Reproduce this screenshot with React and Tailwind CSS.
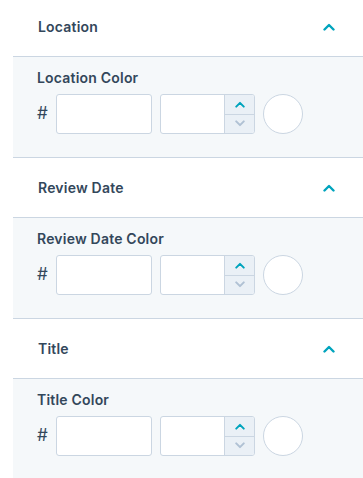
import React from 'react';

const font = { fontFamily: 'Inter, "Noto Sans", sans-serif' };

function Chevron({ className, down }) {
  return (
    <svg viewBox="0 0 12 8" className={className} fill="none" stroke="currentColor" strokeWidth="2.4" strokeLinecap="round" strokeLinejoin="round">
      {down ? <path d="M1.5 1.5 L6 6 L10.5 1.5" /> : <path d="M1.5 6.5 L6 2 L10.5 6.5" />}
    </svg>
  );
}

function Section({ title, label }) {
  return (
    <div>
      {/* header */}
      <div className="h-[60px] flex items-center justify-between pl-[25px] pr-[28px] border-b border-[#cbd6e2] bg-white">
        <div className="text-[14px] font-semibold tracking-[0.2px] text-[#33475b]">{title}</div>
        <Chevron className="w-[12px] h-[8px] text-[#00a4bd]" />
      </div>

      {/* body */}
      <div className="h-[101px] bg-[#f5f8fa] border-b border-[#cbd6e2] pl-[24px] pt-[11px]">
        <div className="text-[14px] leading-[20px] font-semibold tracking-[0.2px] text-[#33475b]">{label}</div>
        <div className="mt-[6px] flex items-center">
          <span className="w-[19px] text-[17px] text-[#33475b]">#</span>
          <div className="w-[96px] h-[40px] bg-white border border-[#cbd6e2] rounded-[3px]" />
          <div className="ml-[8px] w-[95px] h-[40px] bg-white border border-[#cbd6e2] rounded-[3px] flex overflow-hidden">
            <div className="flex-1" />
            <div className="w-[30px] bg-[#eaf0f6] border-l border-[#cbd6e2] flex flex-col">
              <div className="flex-1 flex items-center justify-center border-b border-[#cbd6e2]">
                <Chevron className="w-[10px] h-[7px] text-[#00a4bd]" />
              </div>
              <div className="flex-1 flex items-center justify-center">
                <Chevron down className="w-[10px] h-[7px] text-[#b0c1d4]" />
              </div>
            </div>
          </div>
          <div className="ml-[8px] w-[40px] h-[40px] rounded-full bg-white border border-[#cbd6e2]" />
        </div>
      </div>
    </div>
  );
}

export default function App() {
  return (
    <div className="w-[363px] h-[478px] overflow-hidden bg-white pl-[13px]" style={font}>
      <div className="-mt-[3px]">
        <Section title="Location" label="Location Color" />
        <Section title="Review Date" label="Review Date Color" />
        <Section title="Title" label="Title Color" />
      </div>
    </div>
  );
}
